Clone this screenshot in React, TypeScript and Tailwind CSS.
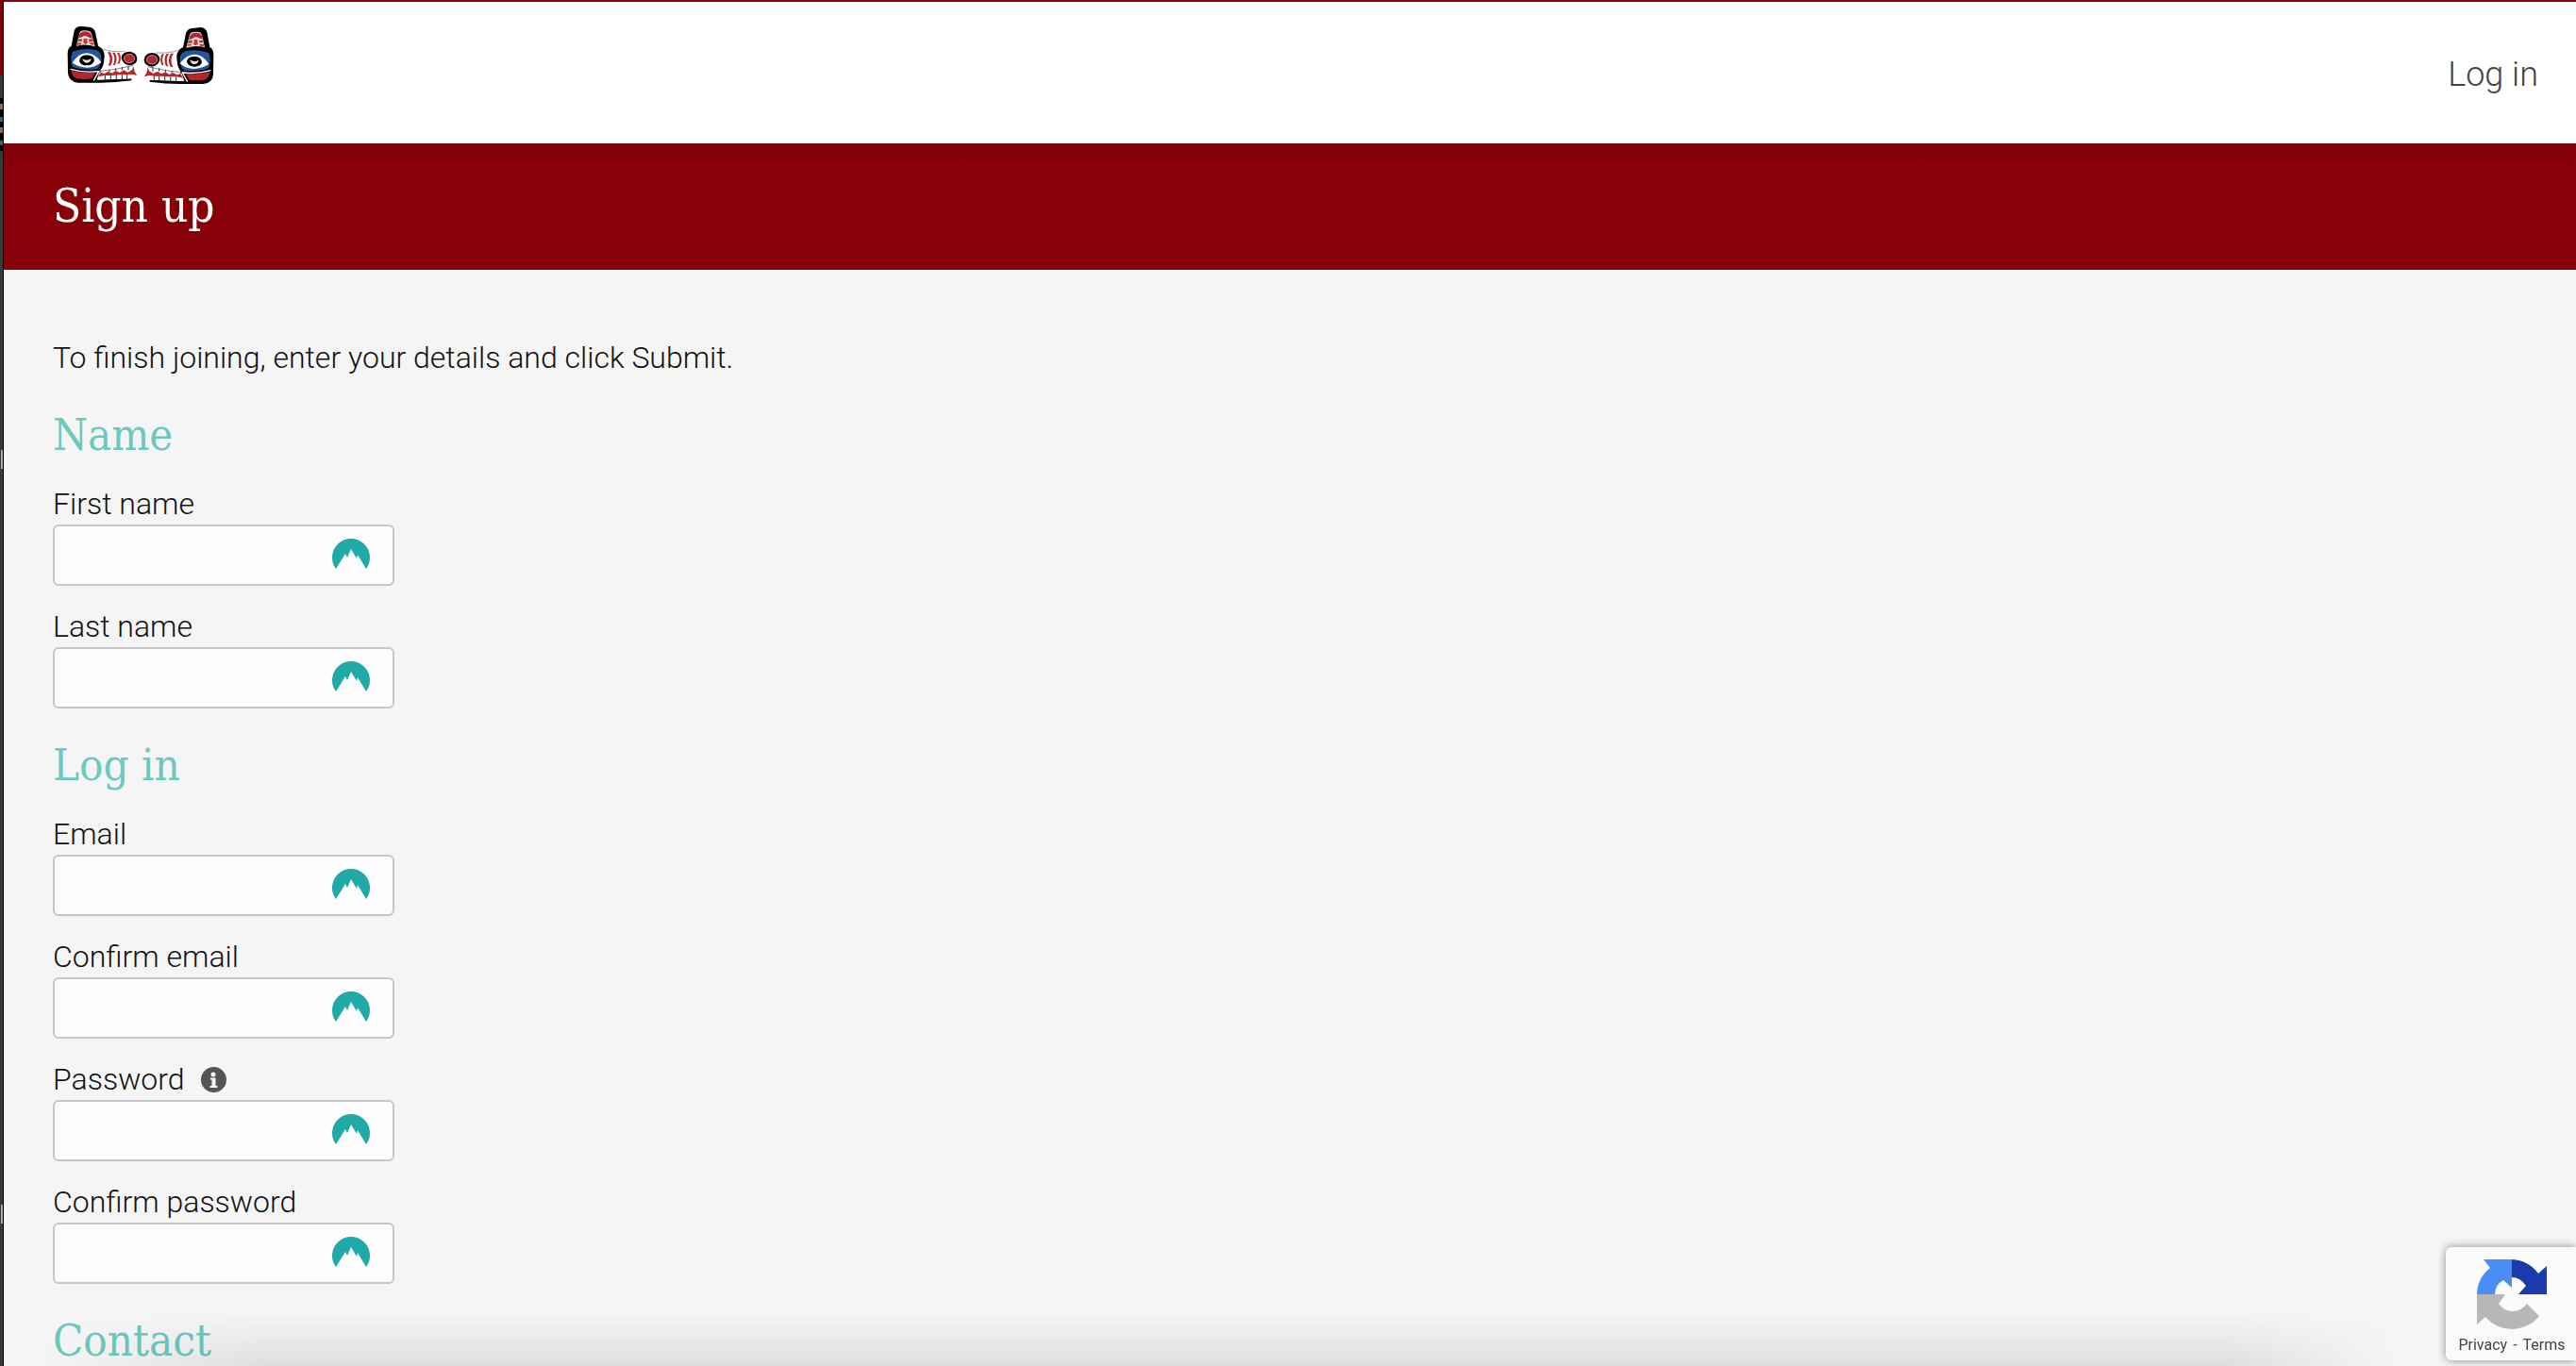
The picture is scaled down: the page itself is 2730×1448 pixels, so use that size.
import type { ReactNode } from "react";

interface FieldProps {
  id: string;
  label: string;
  type?: string;
  hint?: ReactNode;
}

/** One half of the logo: a carved wolf head facing right. */
function WolfHead() {
  return (
    <g>
      {/* ear and skull */}
      <path
        d="M17 74 L26 26 Q30 12 46 11 L74 14 Q89 16 93 30 L102 74 Q124 84 122 108 L120 138 L104 170 L100 182 L208 178 L208 184 Q150 192 100 191 L38 191 Q8 188 6 160 L5 98 Q5 80 17 74 Z"
        fill="#000"
      />
      <path d="M33 75 L42 35 Q45 25 58 25 L72 26 Q80 28 82 38 L92 76 Q60 66 33 75 Z" fill="#f3e6df" />
      <path d="M39 48 Q42 28 58 28 L70 29 Q80 32 84 50 L74 48 Q60 36 48 47 Z" fill="#b3262e" />
      <path
        d="M39 52 H52 L50 60 H37 Z M56 50 H68 L67 60 H55 Z M72 52 H85 L87 61 H73 Z M36 64 H50 L48 70 L35 72 Z M54 64 L62 69 L70 64 L68 60 H56 Z M74 64 H88 L89 71 L76 69 Z"
        fill="#c03a3a"
      />
      {/* eye */}
      <path d="M20 92 Q60 78 98 88 Q114 96 112 118 Q110 138 98 148 Q50 152 20 140 Q12 116 20 92 Z" fill="#22579d" />
      <path d="M20 128 Q40 96 66 97 Q92 98 112 126 Q92 143 68 143 Q42 142 20 128 Z" fill="#fff" />
      <path d="M42 122 Q44 104 66 103 Q88 104 90 120 Q86 136 66 136 Q46 136 42 122 Z" fill="#000" />
      <path d="M52 115 Q66 124 80 114 Q78 128 66 128 Q54 127 52 115 Z" fill="#dfe6ea" />
      {/* jaw */}
      <path d="M17 153 Q50 162 94 158 L82 178 Q54 182 34 178 Q18 172 17 153 Z" fill="#b3262e" />
      <path d="M14 148 Q54 160 104 155 L88 184" fill="none" stroke="#fff" strokeWidth="4" />
      {/* snout */}
      <path d="M124 90 Q150 98 182 94 L172 110 L182 134 L220 138 L218 152 L122 158 L108 154 Q126 130 124 90 Z" fill="#fff" />
      <path d="M118 84 Q140 94 188 92" fill="none" stroke="#666" strokeWidth="2" />
      <path
        d="M132 94 Q146 112 134 138 L142 136 Q153 114 141 94 Z M147 95 Q160 112 149 136 L156 134 Q166 113 155 95 Z M162 96 Q173 112 163 132 L170 130 Q178 112 169 96 Z"
        fill="#b3262e"
      />
      <path d="M176 112 Q178 92 202 92 Q224 94 226 114 Q226 134 202 136 Q180 134 176 112 Z" fill="#000" />
      <ellipse cx="201" cy="114" rx="17" ry="14" fill="#b3262e" stroke="#e8c8c8" strokeWidth="2" />
      {/* teeth */}
      <path d="M106 158 L216 136 L218 168 L206 178 L98 181 Z" fill="#fff" />
      <path
        d="M102 172 L110 158 L122 162 L134 155 L146 161 L158 153 L170 159 L184 151 L196 158 L210 150 L214 138 L218 156 L226 168 L210 164 L190 166 L168 166 L146 168 L122 168 Z"
        fill="#b3262e"
      />
      <path
        d="M124 168 V181 M142 168 V181 M160 166 V180 M178 166 V180 M194 165 V179 M138 149 V156 M158 145 V153 M178 141 V151 M198 138 V151"
        stroke="#222"
        strokeWidth="3"
      />
      <path d="M108 154 Q160 150 214 136" fill="none" stroke="#444" strokeWidth="2" />
    </g>
  );
}

function Logo() {
  return (
    <svg viewBox="0 0 474 204" className="h-[68px] w-[158px]" role="img" aria-label="Home">
      <WolfHead />
      <g transform="translate(474 4) scale(-1 1)">
        <WolfHead />
      </g>
    </svg>
  );
}

function MountainIcon() {
  return (
    <svg viewBox="0 0 40 32" className="h-8 w-10" aria-hidden="true">
      <path
        d="M4 32 A20 20 0 1 1 36 32 L27 17 L26 21 L20 11 L16 20 L14 16 Z"
        fill="#1fa9a7"
      />
    </svg>
  );
}

function InfoIcon() {
  return (
    <svg viewBox="0 0 27 27" className="size-[27px]" aria-hidden="true">
      <circle cx="13.5" cy="13.5" r="13.5" fill="#555" />
      <circle cx="13" cy="8" r="2.5" fill="#f5f5f5" />
      <path d="M10 11.5 H15.5 V20 H17.5 V22 H9.5 V20 H11.5 V13.5 H10 Z" fill="#f5f5f5" />
    </svg>
  );
}

function RecaptchaIcon() {
  return (
    <svg viewBox="0 0 74 75" className="h-[75px] w-[74px]" aria-hidden="true">
      <path d="M37 0 A37 37 0 0 1 65 15 L74 7 V37 H44 L52 28 Q46 19 37 19 Z" fill="#1c3aa9" />
      <path d="M37 0 V30 L28 22 Q19 27 19 37 H0 A37 37 0 0 1 14 9 L7 0 Z" fill="#4a8df5" />
      <path d="M0 37 H30 L23 47 Q29 55 38 55 Q48 54 53 47 L66 60 A37 37 0 0 1 9 61 L0 69 Z" fill="#b7b7b7" />
    </svg>
  );
}

function Field({ id, label, type = "text", hint }: FieldProps) {
  return (
    <div className="mb-[23px]">
      <div className="flex items-center gap-[18px]">
        <label htmlFor={id} className="text-[32px] leading-10">
          {label}
        </label>
        {hint}
      </div>
      <div className="mt-0.5 flex h-[65px] w-[362px] items-start rounded-md border-2 border-[#c6c6c6] bg-[#fcfcfc]">
        <input id={id} type={type} className="h-full min-w-0 flex-1 bg-transparent px-4 text-[32px] outline-none" />
        <span className="mt-[13px] mr-6">
          <MountainIcon />
        </span>
      </div>
    </div>
  );
}

function Section({ title, children }: { title: string; children?: ReactNode }) {
  return (
    <section className="pb-[7px]">
      <h2 className="mb-[23px] font-['Roboto_Slab','DejaVu_Serif_Condensed','DejaVu_Serif',serif] text-[47px] leading-[60px] font-normal text-[#6cc9bf]">
        {title}
      </h2>
      {children}
    </section>
  );
}

export default function App() {
  return (
    <div className="flex h-screen w-full overflow-hidden bg-[#f5f5f5] font-[Roboto,sans-serif] font-light text-[#111]">
      {/* Sliver of the window behind */}
      <div className="flex w-1 shrink-0 flex-col border-r border-black bg-[#343a3c]">
        <div className="h-20 bg-[#780006]" />
        <div className="mt-6 h-14 bg-[repeating-linear-gradient(#000_0_6px,#8a6a60_6px_12px,#000_12px_20px,#46586c_20px_25px)]" />
        <div className="mt-[317px] ml-px h-5 bg-[#aaa]" />
        <div className="mt-[780px] ml-px h-5 bg-[#aaa]" />
      </div>

      <div className="min-w-0 flex-1">
        <header className="flex h-[152px] items-start justify-between border-t-2 border-[#8b0008] bg-white pr-10 pl-[66px]">
          <a href="#home" className="mt-[22px]">
            <Logo />
          </a>
          <a href="#login" className="mt-[55px] text-4xl leading-[44px] text-[#444]">
            Log in
          </a>
        </header>

        <div className="flex h-[134px] items-center bg-[#880008] bg-linear-to-b from-[#7c0408] to-[#880008] to-15% px-[52px]">
          <h1 className="font-['Roboto_Slab','DejaVu_Serif_Condensed','DejaVu_Serif',serif] text-[49px] leading-[60px] font-normal text-white">
            Sign up
          </h1>
        </div>

        <main className="px-[52px] pt-[73px]">
          <p className="mb-8 text-[32px] leading-10">
            To finish joining, enter your details and click Submit.
          </p>
          <form>
            <Section title="Name">
              <Field id="first-name" label="First name" />
              <Field id="last-name" label="Last name" />
            </Section>
            <Section title="Log in">
              <Field id="email" label="Email" type="email" />
              <Field id="confirm-email" label="Confirm email" type="email" />
              <Field
                id="password"
                label="Password"
                type="password"
                hint={
                  <button type="button" aria-label="Password rules">
                    <InfoIcon />
                  </button>
                }
              />
              <Field id="confirm-password" label="Confirm password" type="password" />
            </Section>
            <Section title="Contact" />
          </form>
        </main>
      </div>

      {/* Shade along the bottom edge */}
      <div className="pointer-events-none fixed right-[190px] bottom-0 left-10 h-14 bg-linear-to-t from-black/9 to-transparent mask-[linear-gradient(to_right,transparent,black_240px,black_calc(100%-180px),transparent)]" />

      <aside className="fixed right-0 bottom-1.5 flex h-[120px] w-[138px] flex-col items-center rounded-l-md bg-[#fafafa] pt-[13px] pl-0.5 font-normal shadow-[0_0_10px_#888]">
        <RecaptchaIcon />
        <p className="mt-1.5 flex gap-1.5 text-base leading-5 text-[#444]">
          <a href="#privacy">Privacy</a>
          <span>-</span>
          <a href="#terms">Terms</a>
        </p>
      </aside>
    </div>
  );
}
